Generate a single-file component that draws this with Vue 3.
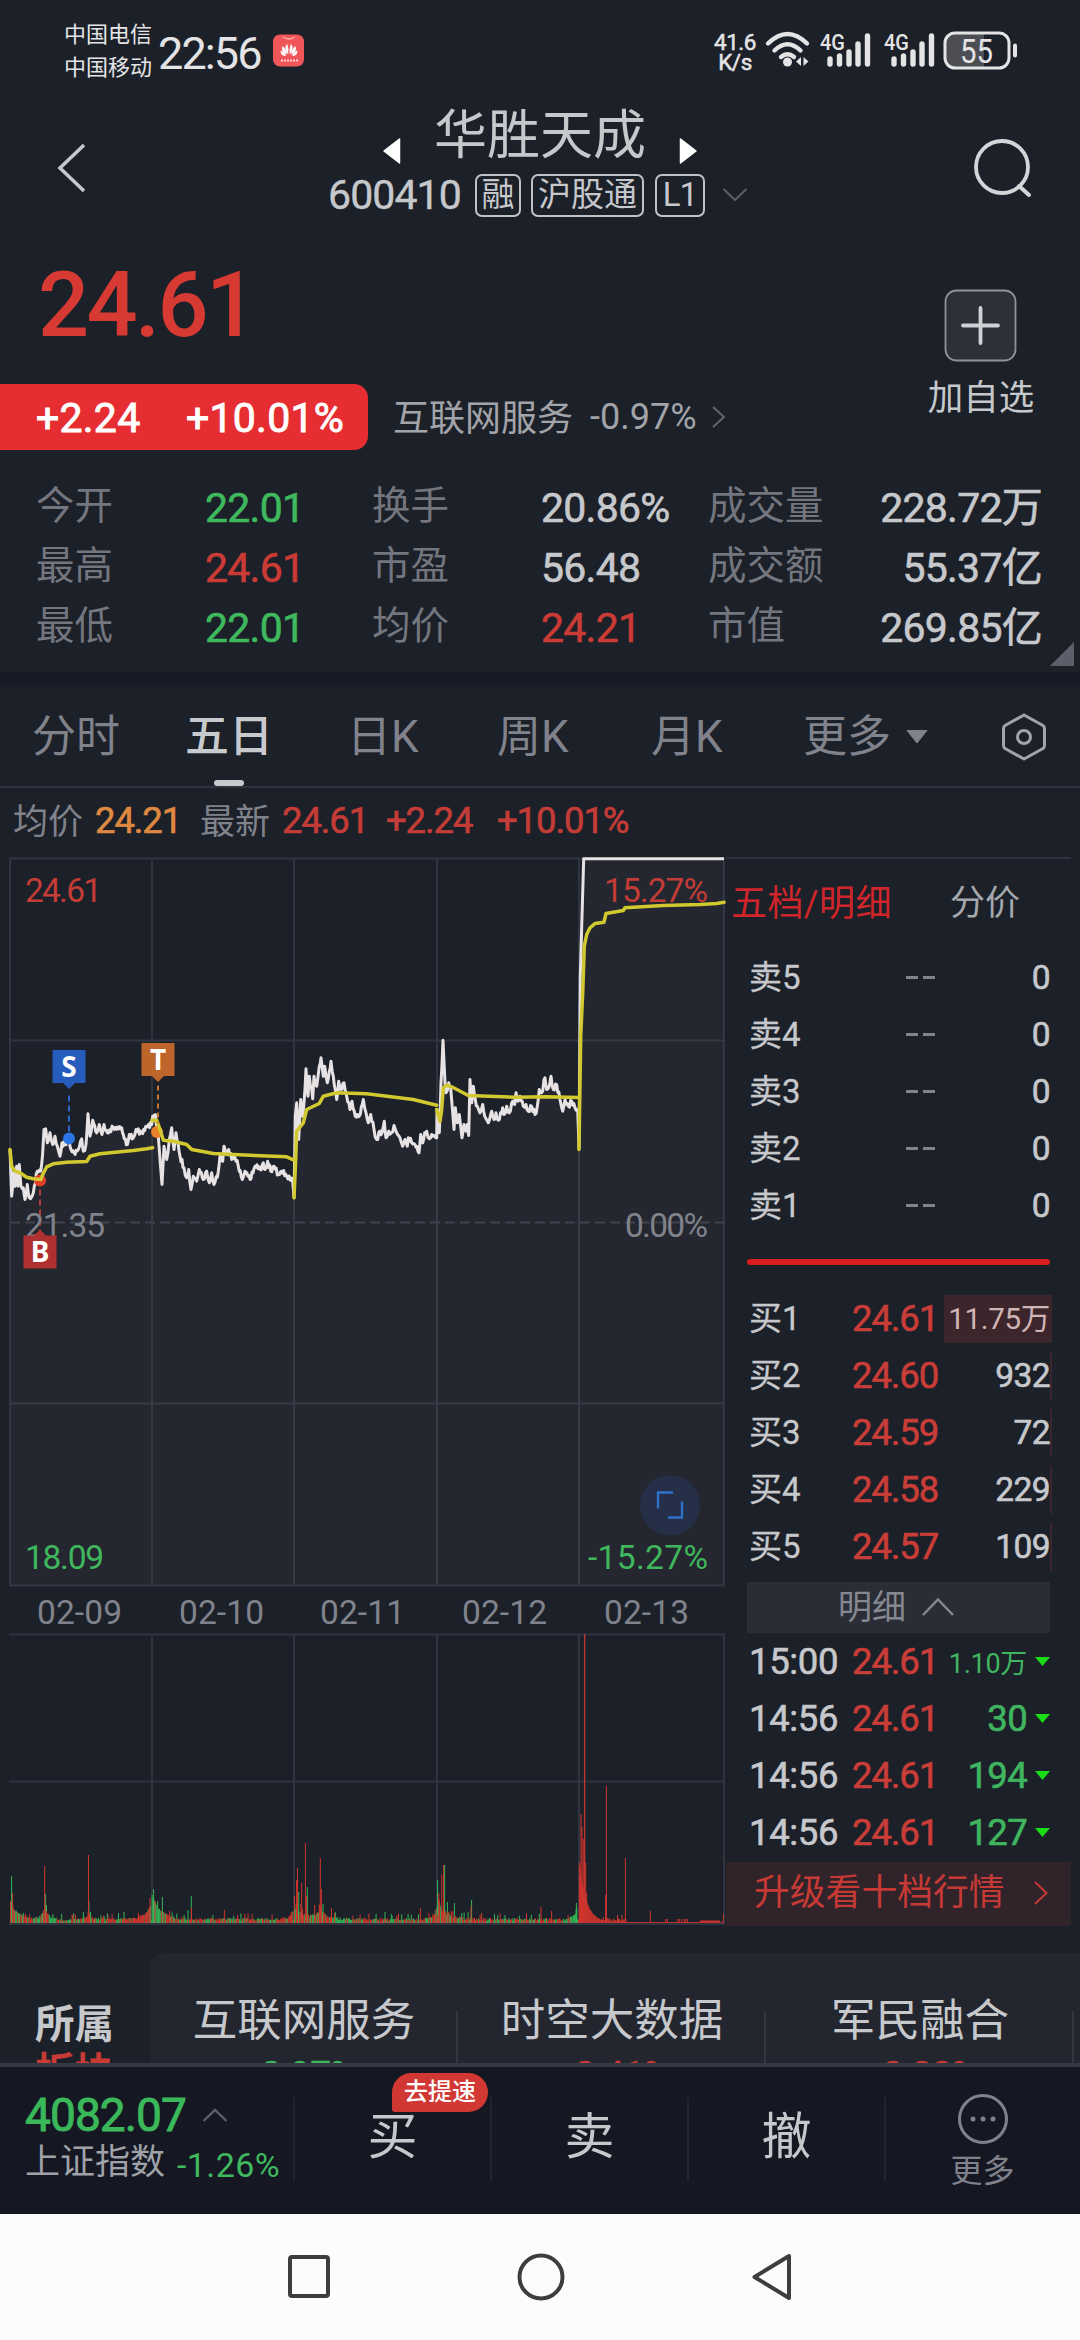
<script setup>
const stats = [
  [['今开', '22.01', 'green'], ['换手', '20.86%', ''], ['成交量', '228.72万', '']],
  [['最高', '24.61', 'red'], ['市盈', '56.48', ''], ['成交额', '55.37亿', '']],
  [['最低', '22.01', 'green'], ['均价', '24.21', 'red'], ['市值', '269.85亿', '']],
]
const tabs = [
  { label: '分时', left: 32 },
  { label: '五日', left: 185, active: true },
  { label: '日K', left: 347 },
  { label: '周K', left: 497 },
  { label: '月K', left: 651 },
  { label: '更多', left: 803, more: true },
]
const tabWidth = (i) => (i < tabs.length - 1 ? tabs[i + 1].left : 980) - tabs[i].left
const sells = [5, 4, 3, 2, 1]
const buys = [
  ['买1', '24.61', '11.75万'],
  ['买2', '24.60', '932'],
  ['买3', '24.59', '72'],
  ['买4', '24.58', '229'],
  ['买5', '24.57', '109'],
]
const ticks = [
  ['15:00', '1.10万'],
  ['14:56', '30'],
  ['14:56', '194'],
  ['14:56', '127'],
]
const sectors = [
  ['互联网服务', '-0.97%', 'green'],
  ['时空大数据', '+0.41%', 'red'],
  ['军民融合', '+0.88%', 'red'],
]
const dates = [
  ['02-09', 38], ['02-10', 180], ['02-11', 321], ['02-12', 463], ['02-13', 605],
]
const gridX = [152, 294, 437, 579]

// Samples are stored in thirds of a pixel, measured from the panel origin.
const parse = (s, dx) => s.trim().split(/\s+/).map((p) => {
  const [x, y] = p.split(',').map(Number)
  return [x / 3 + dx, y / 3 - 7]
})
let seed = 7
const rnd = () => {
  seed = (seed * 16807) % 2147483647
  return seed / 2147483647
}
const jitter = (pts) => {
  const out = []
  pts.forEach((p, i) => {
    out.push(p)
    const n = pts[i + 1]
    if (n && n[0] - p[0] > 1.6) {
      const k = Math.round((n[0] - p[0]) / 1.1)
      for (let j = 1; j < k; j++) {
        const t = j / k
        out.push([p[0] + (n[0] - p[0]) * t, p[1] + (n[1] - p[1]) * t + (j % 2 ? 1 : -1) * rnd() * 3])
      }
    }
  })
  return out
}
const str = (pts) => pts.map((p) => p[0].toFixed(1) + ',' + p[1].toFixed(1)).join(' ')

const early = parse(`30,900 35,1040 40,970 45,1010 50,950 54,1010 58,945 63,1010 70,1015 75,1050 82,1005 88,1045 96,1040 103,1010 112,965 122,965
128,910 132,840 137,838 142,880 150,850 158,885 165,860 172,890 180,920 186,880 195,885 207,865 213,900 222,910 235,900 245,868 250,905 258,885
264,793 270,860 278,812 290,850 298,825 306,855 312,825 322,850 340,835 365,835 370,855 382,885 388,855 400,865 408,840 425,850 440,830 455,825
458,800 466,795 475,860 478,900 486,1005 492,890 500,930 508,870 515,835 522,900 528,850 540,920 552,955 560,985 566,960 573,1020 580,980 590,995
598,960 610,990 620,965 628,1000 635,970 642,1005 655,965 660,920 668,935 672,890 680,915 686,900 695,930 705,925 715,950 727,990 735,965 750,990
765,950 780,960 790,940 795,960 803,935 812,965 822,950 835,975 845,965 860,980 878,995`, 0)
const late = parse(`42,1045 46,800 50,760 56,870 62,750 68,800 72,760 78,658 84,740 88,680 98,748 102,680 110,710 118,650 123,625 130,680 134,650 142,700
148,665 153,635 160,680 170,750 176,695 182,720 192,700 200,740 210,780 216,755 226,800 238,800 250,750 258,790 265,820 272,795 282,840 290,870
300,845 306,850 313,815 318,865 326,845 334,850 342,828 350,850 360,865 368,890 375,870 382,890 385,865 395,880 405,885 417,910 422,855 428,880
434,850 440,845 448,868 455,855 465,860 470,865 471,780 474,850 478,850 483,700 489,572 495,700 498,730 506,700 512,715 518,790 522,840 526,775
532,820 538,795 546,865 552,825 558,845 562,825 566,858 570,690 575,760 580,710 586,750 592,770 600,790 608,765 614,800 625,820 635,785 642,810
648,790 655,812 668,775 672,795 680,770 688,790 698,755 704,765 708,730 714,755 720,740 730,770 738,765 745,785 755,770 765,795 772,770 778,720
785,730 795,685 800,720 806,715 813,680 820,720 830,705 840,750 848,785 855,750 865,770 875,755 885,775 893,780`, 280)
const limit = parse('897,895 901,380 905,230 911,28 1332,28', 280)
const price = [...jitter(early), ...jitter(late), ...limit]
const pricePts = str(price)
const areaPts = '10,729 ' + pricePts + ' 724,729'

const averages = [
  parse('30,900 35,950 45,965 60,970 80,983 100,988 122,990 130,972 140,952 160,943 200,938 260,936 270,920 300,913 400,903 440,898 458,895', 0),
  parse('455,812 470,812 480,840 490,872 520,875 560,885 575,900 640,912 700,915 860,922 882,932', 0),
  parse('42,1045 47,930 50,845 70,820 80,780 118,762 130,740 170,730 260,733 400,750 470,767', 280),
  parse('470,780 480,815 485,780 490,715 500,707 515,712 565,738 700,743 800,742 897,744', 280),
  parse('897,900 902,560 908,430 913,290 920,255 930,235 945,222 972,218 978,192 1030,183 1035,175 1150,168 1260,165 1310,162 1332,158', 280),
].map(str)

const spikes = [
  [11.6, 47, 'g'], [12.6, 30, 'r'], [44.7, 57, 'r'], [45.6, 29, 'g'], [46.5, 18, 'g'], [88.5, 68, 'r'], [88.9, 22, 'g'], [124, 11, 'g'], [150, 25, 'r'],
  [153.6, 34, 'g'], [155, 22, 'r'], [162.4, 26, 'g'], [191.3, 27, 'g'], [191.5, 15, 'r'], [224.4, 13, 'r'], [188, 13, 'g'],
  [296.6, 43, 'r'], [297.5, 55, 'r'], [298.8, 31, 'g'], [301.7, 40, 'r'], [305.4, 80, 'r'], [306.4, 27, 'r'], [307.3, 36, 'g'], [320.3, 65, 'r'], [321.3, 34, 'r'],
  [323, 19, 'g'], [331.5, 15, 'r'], [314.7, 18, 'r'], [385, 11, 'g'], [420.4, 15, 'r'], [437.6, 43, 'g'], [438.8, 30, 'r'], [441.8, 48, 'r'], [443.6, 58, 'r'], [444.6, 58, 'g'],
  [447.4, 21, 'g'], [454.4, 20, 'g'], [471.6, 23, 'g'], [471, 17, 'r'], [541, 16, 'r'], [551.6, 12, 'r'], [576.4, 20, 'g'],
  [580.2, 48, 'r'], [581, 109, 'r'], [582, 96, 'r'], [583.3, 84, 'r'], [584.6, 289, 'r'], [585.7, 60, 'r'], [586.7, 30, 'r'], [588, 16, 'r'],
  [605.6, 28, 'r'], [606.4, 137, 'r'], [617.5, 8, 'r'], [622, 8, 'r'], [625.4, 65, 'r'], [650.4, 12, 'r'], [723.4, 9, 'r'],
]
const bars = []
for (let x = 10.5; x < 723; x += 0.8) {
  const near = (c, a, w) => a * Math.exp(-Math.abs(x - c) / w)
  const after = (c, a, w) => (x >= c ? a * Math.exp(-(x - c) / w) : 0)
  const before = (c, a, w) => (x <= c ? a * Math.exp(-(c - x) / w) : 0)
  let h
  let c
  if (x >= 579) {
    h = after(579, 62, 7) + (rnd() < 0.1 ? 4 : 1) + (x > 605 && x < 626 ? 3 * rnd() : 0)
    if (x > 700 && x < 720) h = 2.5
    c = 'r'
  } else {
    h = 2 + rnd() * 3 + (rnd() < 0.08 ? 5 : 0)
    h += after(10, 20, 7) + near(45, 14, 3) + near(89, 5, 4) + before(151, 16, 6) + after(152, 24, 9) + before(293, 10, 4)
    h += after(294, 26, 13) * (0.3 + rnd() * 0.7) + near(321, 9, 4) + before(437, 12, 4) + after(438, 26, 9) * (0.4 + rnd() * 0.6) + before(577, 12, 3)
    const p = x > 130 && x < 152 ? 0.85 : x > 152 && x < 165 ? 0.15 : x > 570 ? 0.1 : 0.5
    c = rnd() < p ? 'r' : 'g'
  }
  bars.push([x, h, c])
}
const barPath = (color) => [...bars, ...spikes].filter((b) => b[2] === color)
  .map(([x, h]) => `M${x.toFixed(1)} 290V${(290 - h).toFixed(1)}`).join('')
const redBars = barPath('r')
const greenBars = barPath('g')
</script>

<template>
  <div class="screen">
    <header class="status">
      <div class="carrier"><span>中国电信</span><span>中国移动</span></div>
      <div class="clock">22:56</div>
      <svg class="app-dot" width="32" height="33" viewBox="0 0 32 33">
        <rect width="31" height="32" y=".5" rx="7" fill="#ef5659" />
        <path d="M10 3q6 4 12 0" fill="none" stroke="#ffb1ad" stroke-width="1.3" />
        <g fill="#fff">
          <path d="M15.200 20.500c-3-4-4-8-1-10.500q2 5 1 10.500M16.800 20.500c3-4 4-8 1-10.500q-2 5-1 10.500" />
          <path d="M13.800 20.800c-4-2-6-5.500-4-8.800q4 4 4 8.800M18.200 20.800c4-2 6-5.500 4-8.800q-4 4-4 8.800" />
          <path d="M12.800 22c-4 0-5.500-2.500-5-5.500q4 2 5 5.500M19.200 22c4 0 5.500-2.500 5-5.500q-4 2-5 5.500" />
        </g>
        <path d="M8 26.500h17" stroke="#ffd4d2" stroke-width="2" stroke-dasharray="2 1" />
      </svg>
      <div class="speed"><span>41.6</span><span>K/s</span></div>
      <svg class="wifi" width="46" height="37" viewBox="0 0 46 37">
        <g fill="none" stroke="#e4e4e6" stroke-width="4.400" stroke-linecap="round">
          <path d="M3 12.500Q22.500-6.500 42 12.500" /><path d="M9.500 19.500q13-12.500 26 0" /><path d="M16 26q6.500-5.500 13 0" />
        </g>
        <circle cx="22.500" cy="31" r="4.500" fill="#e4e4e6" />
        <path d="M36 26v9l-5-4.500zM38.500 26v9l5-4.500z" fill="#e4e4e6" />
      </svg>
      <svg v-for="n in 2" :key="n" class="cell" width="62" height="40" viewBox="0 0 62 40">
        <text x="7" y="20" font-size="22" textLength="25" lengthAdjust="spacingAndGlyphs" class="cell-text">4G</text>
        <g stroke="#e4e4e6" stroke-width="5.400" stroke-linecap="round">
          <path d="M17 29v5M26.500 26v8M36 22v12M45 14v20M54.500 6v28" />
        </g>
      </svg>
      <svg class="battery" width="76" height="40" viewBox="0 0 76 40">
        <path d="M11 3h30v34H11q-8 0-8-8V11q0-8 8-8" fill="#4c4e54" />
        <rect x="2" y="2" width="64" height="35" rx="10" fill="none" stroke="#e4e4e6" stroke-width="3" />
        <path d="M72 14.500v10" stroke="#e4e4e6" stroke-width="4" stroke-linecap="round" />
        <text x="17" y="31.500" font-size="33" textLength="33" lengthAdjust="spacingAndGlyphs" class="cell-text thin">55</text>
      </svg>
    </header>

    <section class="titlebar">
      <svg class="back" width="30" height="52" viewBox="0 0 30 52"><path d="M27 3 3 26l24 23" fill="none" stroke="#c6c8cc" stroke-width="3.500" /></svg>
      <div class="title-mid">
        <div class="name-row">
          <svg width="20" height="28" viewBox="0 0 20 28"><path d="M17.500 2v24L2 14z" fill="#fff" stroke="#fff" stroke-width="1.500" stroke-linejoin="round" /></svg>
          <h1>华胜天成</h1>
          <svg width="20" height="28" viewBox="0 0 20 28"><path d="M2.500 2v24L18 14z" fill="#fff" stroke="#fff" stroke-width="1.500" stroke-linejoin="round" /></svg>
        </div>
        <div class="code-row">
          <span class="code">600410</span><span class="tag t1">融</span><span class="tag t2">沪股通</span><span class="tag t3">L1</span>
          <svg width="26" height="16" viewBox="0 0 26 16"><path d="M1.500 2 13 13 24.500 2" fill="none" stroke="#5a5e67" stroke-width="2.200" /></svg>
        </div>
      </div>
      <svg class="search" width="60" height="60" viewBox="0 0 60 60"><circle cx="29" cy="28" r="26" fill="none" stroke="#d4d5d8" stroke-width="3.800" /><path d="m46 47 10 9" stroke="#d4d5d8" stroke-width="4" stroke-linecap="round" /></svg>
    </section>

    <section class="quote">
      <div class="quote-main">
        <div class="price">24.61</div>
        <div class="change-row">
          <div class="badge num"><span>+2.24</span><span>+10.01%</span></div>
          <span class="industry">互联网服务</span><span class="ind-chg">-0.97%</span>
          <svg width="16" height="24" viewBox="0 0 16 24"><path d="m2 2 11 10L2 22" fill="none" stroke="#62656c" stroke-width="2" /></svg>
        </div>
      </div>
      <div class="add">
        <svg width="74" height="74" viewBox="0 0 74 74"><rect x="1.500" y="1.500" width="70" height="70" rx="11" fill="#2d3038" stroke="#8f9299" stroke-width="1.800" /><path d="M36.500 19v35M19 36.500h35" stroke="#d0d1d5" stroke-width="3.800" stroke-linecap="round" /></svg>
        <span>加自选</span>
      </div>
    </section>

    <section class="stats">
      <div v-for="(row, i) in stats" :key="i" class="stat-row">
        <template v-for="cell in row" :key="cell[0]">
          <span class="k">{{ cell[0] }}</span><span class="v num" :class="cell[2]">{{ cell[1] }}</span>
        </template>
      </div>
      <svg class="corner" width="24" height="24" viewBox="0 0 24 24"><path d="M24 0v24H0z" fill="#5b5f69" /></svg>
    </section>
    <div class="band"></div>

    <nav class="tabs">
      <div v-for="(t, i) in tabs" :key="t.label" class="tab" :class="{ active: t.active }" :style="{ width: tabWidth(i) + 'px' }">
        <span>{{ t.label }}</span>
        <svg v-if="t.more" width="24" height="16" viewBox="0 0 24 16"><path d="M2 1.500h20L12 14z" fill="#80838b" stroke="#80838b" stroke-linejoin="round" /></svg>
      </div>
      <svg class="gear" width="46" height="48" viewBox="0 0 46 48"><path d="m23 2 19 10.500q1.500 1 1.500 3v17q0 2-1.500 3L23 46 4 35.500q-1.500-1-1.500-3v-17q0-2 1.500-3z" fill="none" stroke="#a2a4aa" stroke-width="3" stroke-linejoin="round" /><circle cx="23" cy="24" r="6.500" fill="none" stroke="#a2a4aa" stroke-width="3" /></svg>
    </nav>

    <div class="summary">
      <span class="lab">均价</span><span class="num orange s1">24.21</span><span class="lab">最新</span><span class="num s2">24.61</span><span class="num s3">+2.24</span><span class="num">+10.01%</span>
    </div>

    <main class="market">
      <div class="charts">
        <svg class="trend" width="726" height="732" viewBox="0 0 726 732">
          <g transform="translate(0,-.5)">
            <g stroke="#303440" stroke-width="2" fill="none">
              <path d="M10 2H724V729H10zM10 184H724M10 547H724" />
              <path v-for="x in gridX" :key="x" :d="`M${x} 2V729`" />
              <path d="M10 366H724" stroke-width="1.800" stroke="#393d48" stroke-dasharray="10 5" />
            </g>
            <polygon :points="areaPts" fill="#8f929c" fill-opacity=".065" />
            <polyline :points="pricePts" fill="none" stroke="#e7e2e3" stroke-width="3" stroke-linejoin="round" />
            <circle cx="40" cy="324" r="6" fill="#e0402c" />
            <circle cx="69" cy="282" r="6" fill="#2a74e4" />
            <circle cx="157" cy="275.500" r="6" fill="#ec812b" />
            <polyline v-for="(a, i) in averages" :key="i" :points="a" fill="none" stroke="#d1c92f" stroke-width="3.500" stroke-linejoin="round" stroke-linecap="round" />
            <path d="M69 239v36" stroke="#2a66c4" stroke-width="2" stroke-dasharray="6 4" />
            <path d="M158 229v38" stroke="#c87634" stroke-width="2" stroke-dasharray="5 4" />
            <path d="M40 333v42" stroke="#b33b3d" stroke-width="2" stroke-dasharray="6 4" />
            <path d="M52.500 193.500h33v33H75l-6 6-6-6H52.500z" fill="#265dbc" />
            <path d="M141.500 186.500h33v33H164l-6 6-6-6h-10.500z" fill="#bd652b" />
            <g class="axis">
              <text x="25" y="45.500" textLength="77" fill="#c43c36">24.61</text>
              <text x="25" y="380.500" textLength="80" fill="#80838b">21.35</text>
              <text x="25" y="712.500" textLength="79" fill="#3fb75c">18.09</text>
              <text x="604" y="45.500" textLength="104" fill="#c43c36">15.27%</text>
              <text x="625" y="380.500" textLength="83" fill="#80838b">0.00%</text>
              <text x="588" y="712.500" textLength="120" fill="#3fb75c">-15.27%</text>
            </g>
            <path d="M23.500 379H34l6-6 6 6h10.500v33h-33z" fill="#ae3030" />
            <g class="pin"><text x="69" y="220">S</text><text x="158" y="213.500">T</text><text x="40" y="405.500">B</text></g>
            <circle cx="670" cy="649" r="30" fill="#262f48" />
            <path d="M658 652v-16h15M668 661h14v-16" fill="none" stroke="#306fca" stroke-width="2.400" />
          </g>
        </svg>
        <svg class="dates" width="726" height="45" viewBox="0 0 726 45">
          <g class="axis" fill="#80838b"><text v-for="d in dates" :key="d[0]" :x="d[1] - 1" y="34.500" textLength="85">{{ d[0] }}</text></g>
        </svg>
        <svg class="volume" width="726" height="293" viewBox="0 0 726 293">
          <g stroke="#303440" stroke-width="2" fill="none">
            <path d="M9 1.500H724V291H9M9 148.500H724" />
            <path v-for="x in gridX" :key="x" :d="`M${x} 1V291`" />
          </g>
          <path :d="greenBars" stroke="#35b558" stroke-width="1" />
          <path :d="redBars" stroke="#d2352e" stroke-width="1" />
          <path d="M584.600 1V290" stroke="#c33732" stroke-width="1.300" />
        </svg>
      </div>

      <aside class="book">
        <div class="book-tabs"><span class="on">五档/明细</span><span>分价</span></div>
        <div class="orders">
          <div v-for="n in sells" :key="n" class="order">
            <span class="who">卖{{ n }}</span><span class="dash"><i></i><i></i></span><span class="qty num">0</span>
          </div>
        </div>
        <div class="ratio"></div>
        <div class="orders">
          <div v-for="b in buys" :key="b[0]" class="order">
            <span class="who">{{ b[0] }}</span><span class="px num">{{ b[1] }}</span>
            <span class="qty num" :class="b[0] === '买1' ? 'big' : 'edge'">{{ b[2] }}</span>
          </div>
        </div>
        <div class="detail">明细<svg width="34" height="20" viewBox="0 0 34 20"><path d="M2 18 17 2.500 32 18" fill="none" stroke="#858890" stroke-width="2.500" /></svg></div>
        <div class="orders ticks">
          <div v-for="(t, i) in ticks" :key="i" class="order">
            <span class="time num">{{ t[0] }}</span><span class="px num">24.61</span>
            <span class="vol num" :class="{ small: i === 0 }">{{ t[1] }}</span>
            <svg width="15" height="9" viewBox="0 0 15 9"><path d="M0 0h15L7.500 9z" fill="#1add15" /></svg>
          </div>
        </div>
        <div class="upgrade">升级看十档行情<svg width="16" height="26" viewBox="0 0 16 26"><path d="m2 2 11.500 11L2 24" fill="none" stroke="#c63a35" stroke-width="2" /></svg></div>
      </aside>
    </main>

    <section class="sectors">
      <div class="own"><span>所属</span><span class="red">板块</span></div>
      <div class="cards">
        <div v-for="s in sectors" :key="s[0]" class="card">
          <span>{{ s[0] }}</span><span class="num pct" :class="s[2]">{{ s[1] }}</span>
        </div>
      </div>
    </section>

    <footer class="trade">
      <div class="index">
        <div class="idx-top"><span class="num idx">4082.07</span><svg width="28" height="16" viewBox="0 0 28 16"><path d="M2.500 14 14 3l11.500 11" fill="none" stroke="#5c5f68" stroke-width="2.400" /></svg></div>
        <div class="idx-bot"><span>上证指数</span><span class="idx-chg green">-1.26%</span></div>
      </div>
      <div class="act">买<span class="boost">去提速</span></div>
      <div class="act">卖</div>
      <div class="act">撤</div>
      <div class="more">
        <svg width="52" height="52" viewBox="0 0 52 52"><circle cx="26" cy="26" r="23.500" fill="none" stroke="#80828b" stroke-width="3" /><g fill="#80828b"><circle cx="16" cy="26" r="2.500" /><circle cx="26" cy="26" r="2.500" /><circle cx="36" cy="26" r="2.500" /></g></svg>
        <span>更多</span>
      </div>
    </footer>

    <div class="sysnav">
      <svg width="46" height="48" viewBox="0 0 46 48"><rect x="4" y="4" width="38" height="39" rx="2" fill="none" stroke="#3d3d3d" stroke-width="4" /></svg>
      <svg width="50" height="50" viewBox="0 0 50 50"><circle cx="25" cy="25" r="21.500" fill="none" stroke="#3d3d3d" stroke-width="4" /></svg>
      <svg width="44" height="50" viewBox="0 0 44 50"><path d="M39 4v42L4.500 25z" fill="none" stroke="#3d3d3d" stroke-width="4" stroke-linejoin="round" /></svg>
    </div>
  </div>
</template>

<style>
body { margin: 0; background: #1c2028; }
</style>

<style scoped>
.screen {
  width: 1080px; height: 2340px; overflow: hidden; display: flex; flex-direction: column;
  background: #1c2028; color: #c6c8cc; font-family: Roboto, "Noto Sans CJK SC", sans-serif; white-space: nowrap;
}
.screen > * { flex: none; box-sizing: border-box; }
svg { display: block; flex: none; overflow: visible; }
.num { font-weight: 400; letter-spacing: -.018em; -webkit-text-stroke: .6px currentColor; }
.red { color: #ca3b36; }
.green { color: #3fb85e; }
.orange { color: #df8940; }

.status { height: 100px; display: flex; align-items: flex-start; color: #e4e4e6; }
.carrier { margin: 18px 0 0 64px; width: 94px; display: flex; flex-direction: column; font-size: 22px; line-height: 33px; }
.clock { width: 115px; margin-top: 27px; font-size: 45px; line-height: 53px; letter-spacing: -1.9px; }
.app-dot { margin-top: 34px; }
.speed { margin: 32px 0 0 405px; width: 50px; display: flex; flex-direction: column; align-items: center; font-size: 22.500px; line-height: 20px; letter-spacing: -.5px; -webkit-text-stroke: .5px currentColor; }
.wifi { margin: 31px 0 0 5px; }
.cell { margin: 30px 0 0 2px; }
.cell-text { font-family: Roboto, sans-serif; font-weight: 500; fill: #e4e4e6; }
.thin { font-weight: 400; }
.battery { margin: 31px 0 0 4px; }

.titlebar { height: 140px; display: flex; justify-content: space-between; padding: 0 47px 0 57px; }
.back { margin-top: 42px; }
.search { margin-top: 39px; }
.title-mid { margin-left: 26px; width: 430px; display: flex; flex-direction: column; }
.name-row { height: 70px; display: flex; align-items: flex-start; padding-left: 54px; }
.name-row svg { margin-top: 37px; }
.name-row h1 { margin: 3px 0 0; width: 276px; text-align: center; font-size: 53px; font-weight: 400; line-height: 66px; }
.code-row { height: 50px; display: flex; align-items: center; }
.code { width: 147px; font-size: 41px; letter-spacing: -.900px; -webkit-text-stroke: .4px currentColor; }
.tag { box-sizing: border-box; height: 43px; border: 2px solid #c0c2c6; border-radius: 7px; font-size: 33px; line-height: 38px; text-align: center; }
.t1 { width: 46px; margin-right: 10px; }
.t2 { width: 113px; margin-right: 11px; }
.t3 { width: 50px; margin-right: 17px; letter-spacing: -1px; }

.quote { height: 237px; display: flex; justify-content: space-between; }
.price { height: 144px; padding: 13px 0 0 38px; box-sizing: border-box; font-size: 90px; font-weight: 500; line-height: 106px; color: #d63a33; letter-spacing: -2.600px; }
.change-row { display: flex; align-items: center; height: 66px; }
.badge { width: 368px; height: 66px; box-sizing: border-box; padding-left: 36px; border-radius: 0 14px 14px 0; background: #e62e32; color: #fff; font-size: 41px; line-height: 68px; display: flex; letter-spacing: .006em; -webkit-text-stroke: .9px currentColor; }
.badge span:first-child { width: 150px; }
.industry { margin: -5px 0 0 25px; width: 197px; font-size: 36px; color: #a2a4a9; }
.ind-chg { width: 121px; font-size: 36px; letter-spacing: 0; color: #a2a4a9; }
.add { width: 134px; margin-right: 32px; padding-top: 49px; display: flex; flex-direction: column; align-items: center; font-size: 35.500px; line-height: 70px; }

.stats { height: 195px; position: relative; padding-left: 36px; }
.stat-row { height: 60px; display: grid; grid-template-columns: 169px 167px 169px 167px 140px 194px; align-items: center; }
.k { color: #73767f; font-size: 38.500px; line-height: 60px; margin-top: -3px; }
.v { font-size: 41px; line-height: 60px; margin-top: 1px; }
.v:last-child { text-align: right; }
.corner { position: absolute; left: 1050px; top: 165px; }
.band { height: 15px; background: #181b26; }

.tabs { height: 101px; display: flex; padding-left: 32px; border-bottom: 2px solid #2f3340; }
.tab { position: relative; display: flex; align-items: center; height: 96px; font-size: 44px; color: #80838b; }
.tab span { margin-top: -5px; }
.tab.active { color: #c9cace; font-weight: 500; }
.tab.active::after { content: ""; position: absolute; left: 29px; bottom: -3px; width: 30px; height: 6px; border-radius: 3px; background: #c9cace; }
.tab svg { margin-left: 14px; margin-top: 4px; }
.gear { margin: 26px 0 0 21px; }

.summary { height: 69px; display: flex; align-items: center; padding-left: 13px; color: #c43c37; font-size: 36.500px; padding-bottom: 4px; }
.lab { width: 82px; font-size: 35px; color: #80838b; margin-top: -4px; }
.s1 { width: 105px; }
.s2 { width: 104px; }
.s3 { width: 111px; }
.summary .num { letter-spacing: -.03em; }

.market { height: 1068px; display: flex; }
.charts { width: 726px; display: flex; flex-direction: column; }
.volume { margin-top: -1px; }
.axis text { font: 400 33.500px Roboto, sans-serif; }
.pin text { font: 700 28px "Noto Sans", sans-serif; fill: #fff; text-anchor: middle; }
.book { width: 345px; border-top: 2px solid #303440; border-bottom: 2px solid #303440; box-sizing: border-box; height: 1068px; display: flex; flex-direction: column; }
.book > * { flex: none; }
.book-tabs { height: 90px; display: flex; padding-left: 5px; font-size: 35px; line-height: 90px; color: #a4a8ad; }
.book-tabs .on { width: 219px; font-size: 36px; letter-spacing: .4px; color: #d0252a; }
.orders { padding-left: 23px; width: 301px; }
.order { height: 57px; display: flex; align-items: center; }
.who { width: 103px; font-size: 33px; margin-top: -6px; -webkit-text-stroke: .3px currentColor; }
.dash { width: 90px; display: flex; gap: 5px; padding-left: 54px; box-sizing: border-box; }
.dash i { width: 12px; height: 3px; background: #80838b; }
.px { width: 92px; font-size: 36.500px; color: #c93d38; letter-spacing: -.03em; }
.qty { flex: 1; box-sizing: border-box; height: 48px; line-height: 48px; font-size: 33.500px; text-align: right; }
.edge { border-right: 2px solid #3a262c; margin-right: -2px; }
.big { background: #3c262c; color: #d0b5b6; font-size: 29.500px; margin-right: -2px; padding-right: 2px; letter-spacing: -.3px; -webkit-text-stroke: 0; }
.ratio { margin: 25px 0 25px 21px; width: 303px; height: 6px; border-radius: 3px; background: #d81c20; }
.detail { margin: 7px 0 0 21px; width: 303px; height: 51px; box-sizing: border-box; display: flex; align-items: center; padding: 0 0 2px 91px; gap: 15px; font-size: 34px; line-height: 46px; color: #858890; background: #2b2d36; }
.ticks .time { width: 103px; font-size: 36.500px; letter-spacing: -.01em; }
.ticks .vol { width: 83px; margin-right: 8px; text-align: right; color: #40b55f; font-size: 36.500px; }
.ticks .vol.small { font-size: 27px; letter-spacing: -.3px; -webkit-text-stroke: 0; }
.upgrade { margin-top: 1px; height: 61px; display: flex; align-items: center; justify-content: space-between; padding: 0 22px 3px 28px; background: #30232a; color: #c63a35; font-size: 35.800px; line-height: 58px; }

.sectors { height: 138px; display: flex; overflow: hidden; }
.own { flex: none; width: 150px; padding: 76px 0 0 35px; box-sizing: border-box; display: flex; flex-direction: column; font-size: 39.500px; line-height: 48px; font-weight: 700; }
.cards { flex: none; width: 1000px; height: 200px; margin-top: 28px; background: #23262f; border-radius: 14px 0 0 0; display: flex; }
.card { width: 308px; display: flex; flex-direction: column; align-items: center; font-size: 44.500px; line-height: 64px; padding-top: 36px; position: relative; }
.card::after { content: ""; position: absolute; right: 0; top: 58px; width: 2px; height: 80px; background: #343741; }
.pct { font-size: 37px; line-height: 40px; padding-top: 2px; }

.trade { height: 151px; border-top: 4px solid #343a48; background: #151722; display: flex; }
.index { width: 294px; padding-left: 25px; box-sizing: border-box; }
.idx-top { height: 60px; display: flex; align-items: center; gap: 14px; padding-top: 18px; }
.idx { color: #3ab85a; font-size: 46px; width: 162px; letter-spacing: -.900px; -webkit-text-stroke: .9px currentColor; }
.idx-bot { margin-top: -6px; display: flex; align-items: center; gap: 12px; font-size: 35px; line-height: 44px; color: #a0a2a9; }
.idx-chg { font-size: 34px; letter-spacing: .4px; margin-top: 4px; }
.act { position: relative; width: 197px; text-align: center; font-size: 50px; line-height: 141px; }
.act::before, .more::before { content: ""; position: absolute; left: -1px; top: 30px; width: 2px; height: 84px; background: #22242f; }
.boost { position: absolute; left: 98px; top: 6px; width: 96px; height: 39px; border-radius: 20px 20px 20px 3px; background: #d23833; color: #fff; font-size: 24px; font-weight: 500; line-height: 38px; }
.more { position: relative; width: 195px; display: flex; flex-direction: column; align-items: center; padding-top: 26px; font-size: 32px; line-height: 52px; color: #80828b; }

.sysnav { height: 126px; background: #fcfcfc; display: flex; align-items: center; justify-content: center; gap: 184px; }
</style>
